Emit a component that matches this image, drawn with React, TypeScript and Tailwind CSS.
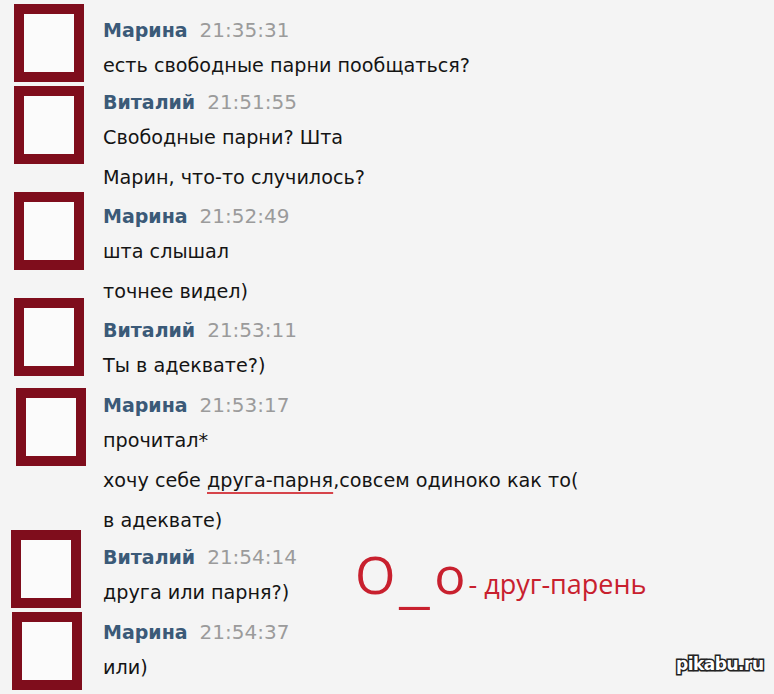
const avatars = [
  "mt-[4px] ml-[14px]",
  "mt-[4px] ml-[14px]",
  "mt-[28px] ml-[14px]",
  "mt-[28px] ml-[14px]",
  "mt-[12px] ml-[16px]",
  "mt-[64px] ml-[11px]",
  "mt-[4px] ml-[12px]",
];

type Msg = {
  name: string;
  time: string;
  lines: React.ReactNode[];
  top: string;
};

const messages: Msg[] = [
  { name: "Марина", time: "21:35:31", lines: ["есть свободные парни пообщаться?"], top: "mt-[14px]" },
  { name: "Виталий", time: "21:51:55", lines: ["Свободные парни? Шта", "Марин, что-то случилось?"], top: "mt-0" },
  { name: "Марина", time: "21:52:49", lines: ["шта слышал", "точнее видел)"], top: "mt-[2px]" },
  { name: "Виталий", time: "21:53:11", lines: ["Ты в адеквате?)"], top: "mt-[2px]" },
  {
    name: "Марина",
    time: "21:53:17",
    lines: [
      "прочитал*",
      <>
        хочу себе{" "}
        <span className="underline decoration-[#d6434a] decoration-[1.5px] underline-offset-[5px]">друга-парня</span>
        ,совсем одиноко как то(
      </>,
      "в адеквате)",
    ],
    top: "mt-[3px]",
  },
  { name: "Виталий", time: "21:54:14", lines: ["друга или парня?)"], top: "mt-0" },
  { name: "Марина", time: "21:54:37", lines: ["или)"], top: "mt-[3px]" },
];

function Avatar({ className }: { className: string }) {
  return <div className={`h-[78px] w-[70px] border-[10px] border-[#7f0d1c] bg-[#fbfbfb] ${className}`} />;
}

export default function App() {
  return (
    <div className="relative h-[694px] w-[774px] overflow-hidden bg-[#f4f4f4] font-['DejaVu_Sans',sans-serif]">
      <div className="flex">
        <div className="flex w-[103px] flex-col">
          {avatars.map((a, i) => (
            <Avatar key={i} className={a} />
          ))}
        </div>
        <div className="flex flex-col">
          {messages.map((m, i) => (
            <div key={i} className={m.top}>
              <div className="flex h-[32px] items-center gap-[12px]">
                <span className="text-[19px] font-bold text-[#3b5a78]">{m.name}</span>
                <span className="text-[20px] text-[#9b9b9b]">{m.time}</span>
              </div>
              {m.lines.map((l, j) => (
                <div key={j} className="flex h-[40px] items-center text-[19.2px] text-[#141414]">
                  <span>{l}</span>
                </div>
              ))}
            </div>
          ))}
        </div>
      </div>

      {/* annotation over the chat */}
      <div className="absolute left-[355px] top-[548px] flex items-baseline font-['Open_Sans',sans-serif] text-[#c8202e]">
        <span className="text-[52px] leading-none">O</span>
        <span className="mx-[8px] inline-block translate-y-[8px] scale-x-[1.35] text-[52px] leading-none">_</span>
        <span className="text-[52px] leading-none">o</span>
        <span className="ml-[3px] text-[27px]">- друг-парень</span>
      </div>

      <div className="absolute left-[676px] top-[652px] font-['DejaVu_Sans',sans-serif] text-[17px] font-bold tracking-[-0.5px] text-white [-webkit-text-stroke:3px_#222] [paint-order:stroke_fill]">
        pikabu.ru
      </div>
    </div>
  );
}
